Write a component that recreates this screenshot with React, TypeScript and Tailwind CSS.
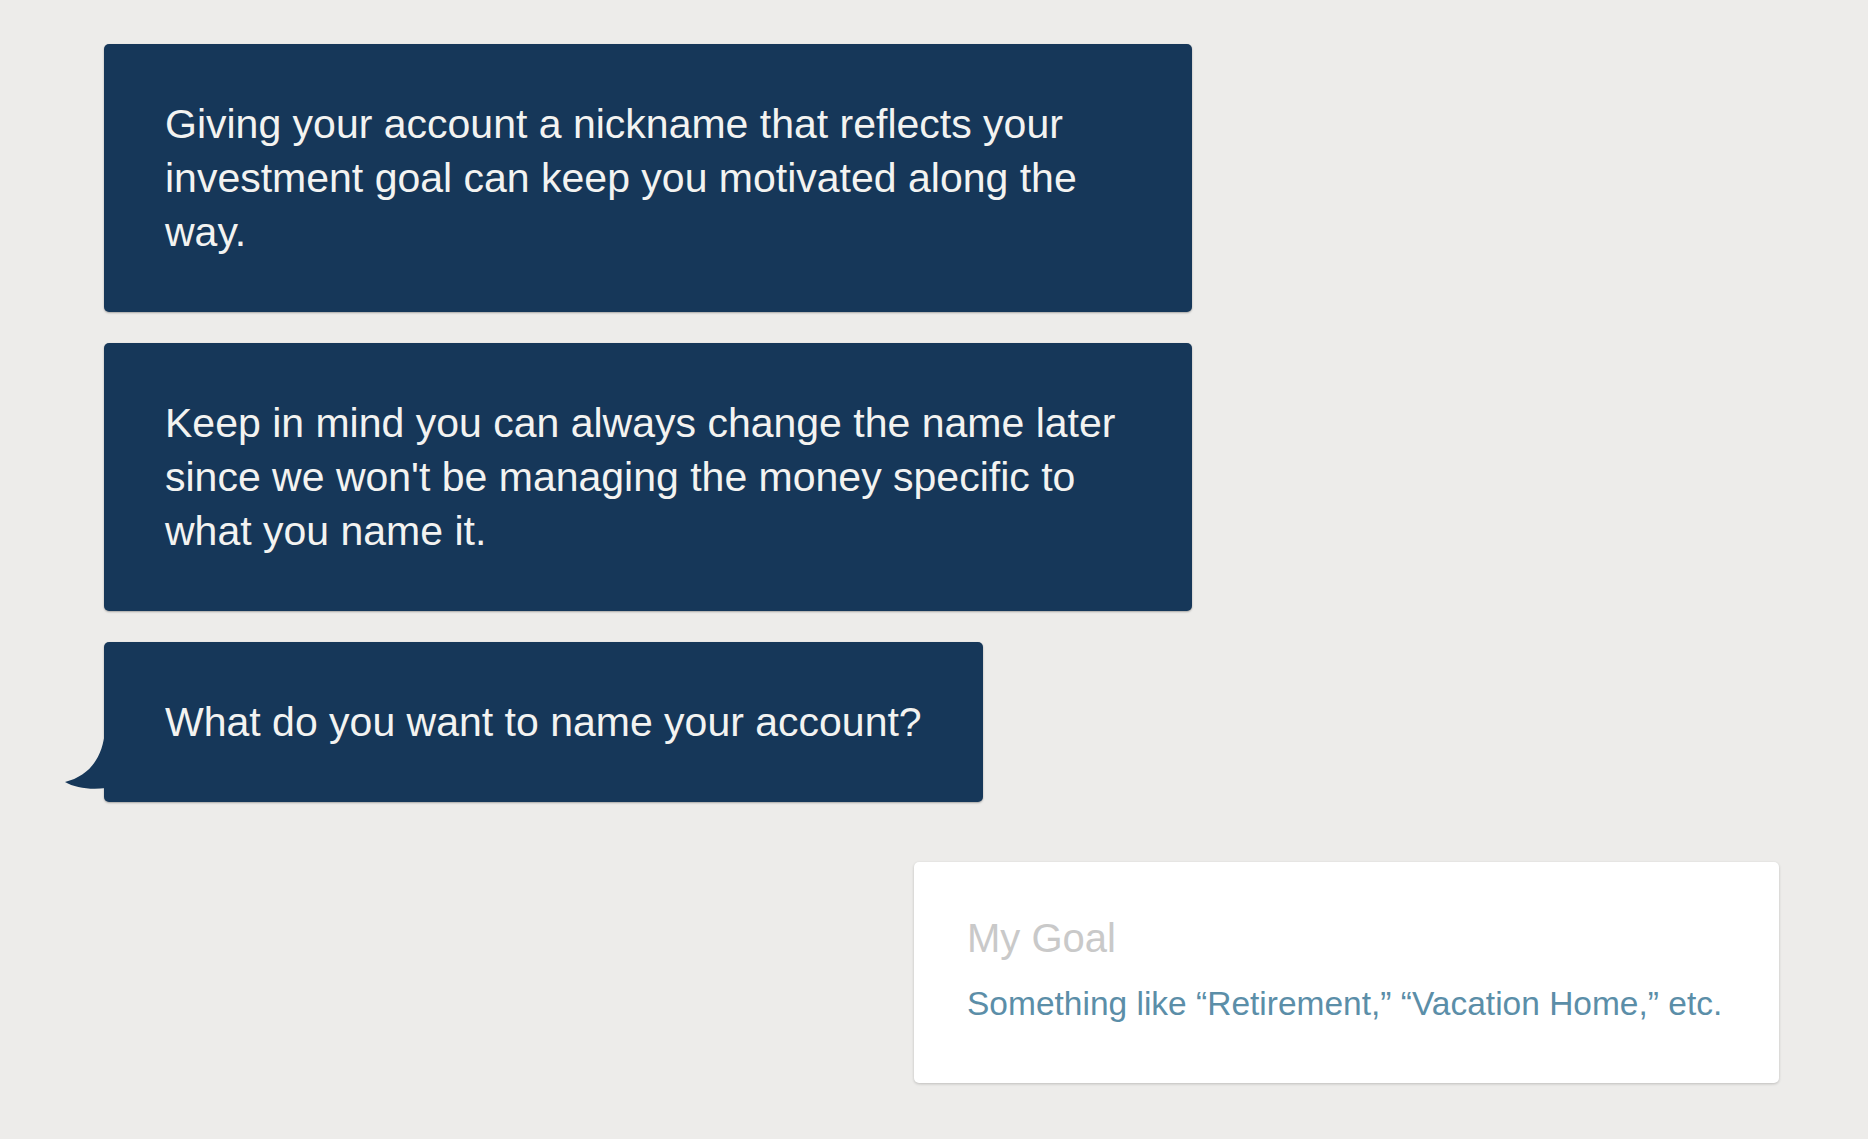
import React from 'react';

const FONT = { fontFamily: '"Liberation Sans", Arial, sans-serif' };

function Bubble({ children, tail = false }: { children: React.ReactNode; tail?: boolean }) {
  return (
    <div className="relative self-start max-w-[1088px] rounded-[5px] bg-[#163759] px-[61px] py-[53px] shadow-[0_1px_2px_rgba(0,0,0,0.3)]">
      {tail && (
        <svg
          className="absolute left-[-39px] bottom-[12px]"
          width="41"
          height="60"
          viewBox="0 0 41 60"
        >
          <path d="M41 0 L40 0 C38 28 24 46 0 52 C10 58 26 60 41 58 Z" fill="#163759" />
        </svg>
      )}
      <p className="text-[41px] leading-[54px] text-[#f3f3f1]">{children}</p>
    </div>
  );
}

export default function App() {
  return (
    <div className="min-h-screen w-full bg-[#edecea] pt-[44px] pl-[104px] pr-[89px]" style={FONT}>
      <div className="flex flex-col gap-[31px]">
        <Bubble>
          Giving your account a nickname that reflects your investment goal can keep you motivated along the way.
        </Bubble>
        <Bubble>
          Keep in mind you can always change the name later since we won't be managing the money specific to what you name it.
        </Bubble>
        <Bubble tail>What do you want to name your account?</Bubble>
      </div>

      <div className="mt-[60px] ml-auto w-[865px] rounded-[5px] bg-white pl-[53px] pr-[40px] pt-[53px] pb-[60px] shadow-[0_1px_3px_rgba(0,0,0,0.2)]">
        <div className="text-[40px] leading-[46px] text-[#c9c9c9]">My Goal</div>
        <div className="mt-[24px] text-[33.5px] leading-[38px] text-[#5b8ea8]">
          Something like “Retirement,” “Vacation Home,” etc.
        </div>
      </div>
    </div>
  );
}
